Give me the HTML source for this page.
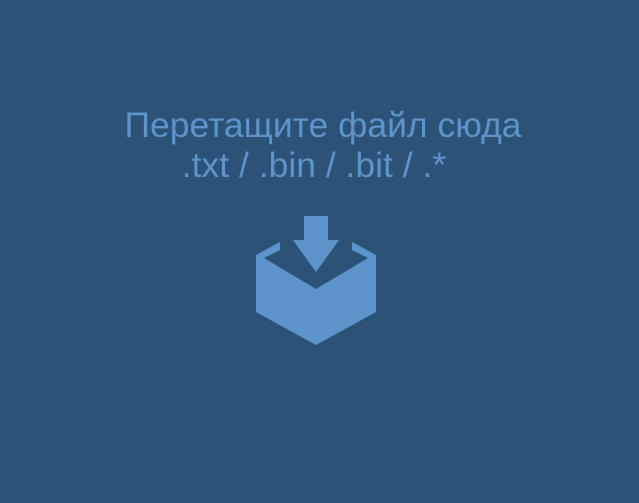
<!DOCTYPE html>
<html><head><meta charset="utf-8"><style>
html,body{margin:0;padding:0}
body{width:639px;height:503px;background:#2c5278;overflow:hidden;position:relative;font-family:"Liberation Sans",sans-serif;color:#5c94cb}
.t{position:absolute;width:800px;text-align:center;font-size:35.5px;white-space:nowrap;line-height:1}
</style></head><body>
<div class="t" style="top:108px;left:-77px">Перетащите файл сюда</div>
<div class="t" style="top:148px;left:-86px">.txt / .bin / .bit / .*</div>
<svg width="639" height="503" style="position:absolute;left:0;top:0">
<path fill="#5c94cb" d="M304 216H328V240H339L316 272L293 240H304Z"/>
<path fill="#5c94cb" d="M256 255L280 242V250L264 258L316 289L368 258L352 250V242L376 255V312L316 345L256 312Z"/>
</svg>
</body></html>
